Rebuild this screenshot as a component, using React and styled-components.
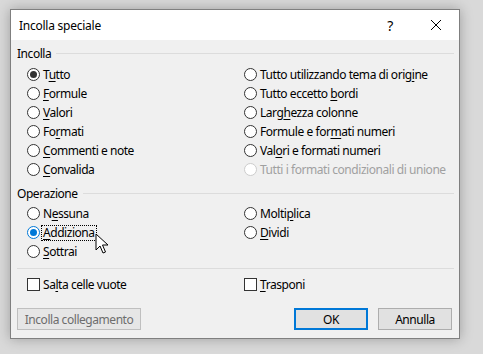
import React from "react";
import styled, { createGlobalStyle } from "styled-components";

const Global = createGlobalStyle`
  html, body { margin: 0; padding: 0; }
  body {
    background: #d9d9d9;
    width: 483px;
    height: 354px;
    overflow: hidden;
    font-family: "Noto Sans", "Open Sans", sans-serif;
    font-size: 12px;
    letter-spacing: -0.45px;
    color: #000;
  }
`;

const Page = styled.div`
  padding: 9px 0 0 10px;
`;

const Dialog = styled.div`
  position: relative;
  width: 448px;
  height: 328px;
  border: 1px solid #7f7f7f;
  background: #f0f0f0;
  box-shadow: 0 0 12px rgba(0, 0, 0, 0.28);
  display: flex;
  flex-direction: column;
`;

const TitleBar = styled.div`
  height: 30px;
  background: #fff;
  display: flex;
  align-items: center;
  padding-left: 8px;
`;

const Title = styled.div`
  flex: 1;
  font-size: 12px;
  letter-spacing: -0.25px;
`;

const TitleButton = styled.div`
  width: ${(p) => p.$w}px;
  height: 30px;
  display: flex;
  align-items: center;
  justify-content: center;
  font-size: 14px;
`;

const Body = styled.div`
  padding: 5px 5px 0 6px;
  display: flex;
  flex-direction: column;
`;

const GroupHeader = styled.div`
  height: 16px;
  display: flex;
  align-items: center;
  gap: 5px;
  margin-top: ${(p) => p.$mt || 0}px;
`;

const GroupLine = styled.div`
  flex: 1;
  height: 1px;
  background: #dcdcdc;
`;

const Separator = styled.div`
  height: 1px;
  background: #dcdcdc;
  margin-top: ${(p) => p.$mt || 0}px;
`;

const Grid = styled.div`
  display: grid;
  grid-template-columns: 217px 1fr;
  grid-auto-rows: 19px;
  padding-left: 10px;
  margin-top: ${(p) => p.$mt || 0}px;
`;

const Option = styled.div`
  display: flex;
  align-items: center;
  gap: 1px;
  color: ${(p) => (p.$disabled ? "#a0a0a0" : "#000")};
  white-space: nowrap;
  grid-column: ${(p) => p.$col || "auto"};
  grid-row: ${(p) => p.$row || "auto"};
`;

const Radio = styled.span`
  box-sizing: border-box;
  width: 13px;
  height: 13px;
  border-radius: 50%;
  border: 1px solid
    ${(p) => (p.$disabled ? "#cccccc" : p.$blue ? "#0078d7" : "#333333")};
  background: #fff;
  display: flex;
  align-items: center;
  justify-content: center;
  flex-shrink: 0;
  &::after {
    content: "";
    display: ${(p) => (p.$checked ? "block" : "none")};
    width: 7px;
    height: 7px;
    border-radius: 50%;
    background: ${(p) => (p.$blue ? "#0078d7" : "#333333")};
  }
`;

const Check = styled.span`
  box-sizing: border-box;
  width: 13px;
  height: 13px;
  border: 1px solid #333333;
  background: #fff;
  flex-shrink: 0;
`;

const Label = styled.span`
  padding: 0 1px;
  border: 1px dotted ${(p) => (p.$focus ? "#000" : "transparent")};
  line-height: 14px;
`;

const U = styled.span`
  text-decoration: underline;
  text-underline-offset: 2px;
`;

const Footer = styled.div`
  display: flex;
  align-items: center;
  margin-top: 14px;
  padding-right: 2px;
`;

const Button = styled.div`
  box-sizing: border-box;
  height: 22px;
  width: ${(p) => p.$w}px;
  border: ${(p) => (p.$default ? "2px solid #0078d7" : p.$disabled ? "1px solid #bfbfbf" : "1px solid #adadad")};
  background: ${(p) => (p.$disabled ? "#e6e6e6" : "#e1e1e1")};
  color: ${(p) => (p.$disabled ? "#6d6d6d" : "#000")};
  display: flex;
  align-items: center;
  justify-content: center;
  margin-left: ${(p) => p.$ml || 0}px;
`;

const Spacer = styled.div`
  flex: 1;
`;

const Cursor = styled.svg`
  position: absolute;
  left: 84px;
  top: 223px;
`;

const L = ({ text, u }) => {
  if (u == null) return text;
  return (
    <>
      {text.slice(0, u)}
      <U>{text[u]}</U>
      {text.slice(u + 1)}
    </>
  );
};

const incolla = [
  [{ t: "Tutto", u: 1, checked: true }, { t: "Tutto utilizzando tema di origine", u: 30 }],
  [{ t: "Formule", u: 0 }, { t: "Tutto eccetto bordi", u: 14 }],
  [{ t: "Valori", u: 0 }, { t: "Larghezza colonne", u: 4 }],
  [{ t: "Formati", u: 2 }, { t: "Formule e formati numeri", u: 13 }],
  [{ t: "Commenti e note", u: 0 }, { t: "Valori e formati numeri", u: 3 }],
  [{ t: "Convalida", u: 0 }, { t: "Tutti i formati condizionali di unione", disabled: true }],
];

export default function App() {
  return (
    <>
      <Global />
      <Page>
        <Dialog>
          <TitleBar>
            <Title>Incolla speciale</Title>
            <TitleButton $w={46}>?</TitleButton>
            <TitleButton $w={46}>
              <svg width="12" height="12" viewBox="0 0 12 12">
                <path d="M1 1 L11 11 M11 1 L1 11" stroke="#000" strokeWidth="1" />
              </svg>
            </TitleButton>
          </TitleBar>
          <Body>
            <GroupHeader>
              Incolla
              <GroupLine />
            </GroupHeader>
            <Grid $mt={4}>
              {incolla.flat().map((o, i) => (
                <Option key={i} $disabled={o.disabled} $col={(i % 2) + 1}>
                  <Radio $checked={o.checked} $disabled={o.disabled} />
                  <Label>
                    <L text={o.t} u={o.u} />
                  </Label>
                </Option>
              ))}
            </Grid>
            <GroupHeader $mt={6}>
              Operazione
              <GroupLine />
            </GroupHeader>
            <Grid $mt={3}>
              <Option $col={1} $row={1}>
                <Radio />
                <Label>
                  <L text="Nessuna" u={1} />
                </Label>
              </Option>
              <Option $col={2} $row={1}>
                <Radio />
                <Label>
                  <L text="Moltiplica" u={5} />
                </Label>
              </Option>
              <Option $col={1} $row={2}>
                <Radio $checked $blue />
                <Label $focus>
                  <L text="Addiziona" u={0} />
                </Label>
              </Option>
              <Option $col={2} $row={2}>
                <Radio />
                <Label>
                  <L text="Dividi" u={0} />
                </Label>
              </Option>
              <Option $col={1} $row={3}>
                <Radio />
                <Label>
                  <L text="Sottrai" u={0} />
                </Label>
              </Option>
            </Grid>
            <Separator $mt={7} />
            <Grid $mt={6}>
              <Option $col={1}>
                <Check />
                <Label>
                  <L text="Salta celle vuote" u={2} />
                </Label>
              </Option>
              <Option $col={2}>
                <Check />
                <Label>
                  <L text="Trasponi" u={0} />
                </Label>
              </Option>
            </Grid>
            <Footer>
              <Button $w={124} $disabled>
                Incolla collegamento
              </Button>
              <Spacer />
              <Button $w={74} $default>
                OK
              </Button>
              <Button $w={74} $ml={10}>
                Annulla
              </Button>
            </Footer>
          </Body>
          <Cursor width="14" height="22" viewBox="0 0 14 22">
            <path
              d="M1 1 L1 17 L5 13 L8 20 L10.5 19 L7.5 12 L13 12 Z"
              fill="#fff"
              stroke="#000"
              strokeWidth="1"
              strokeLinejoin="round"
            />
          </Cursor>
        </Dialog>
      </Page>
    </>
  );
}
